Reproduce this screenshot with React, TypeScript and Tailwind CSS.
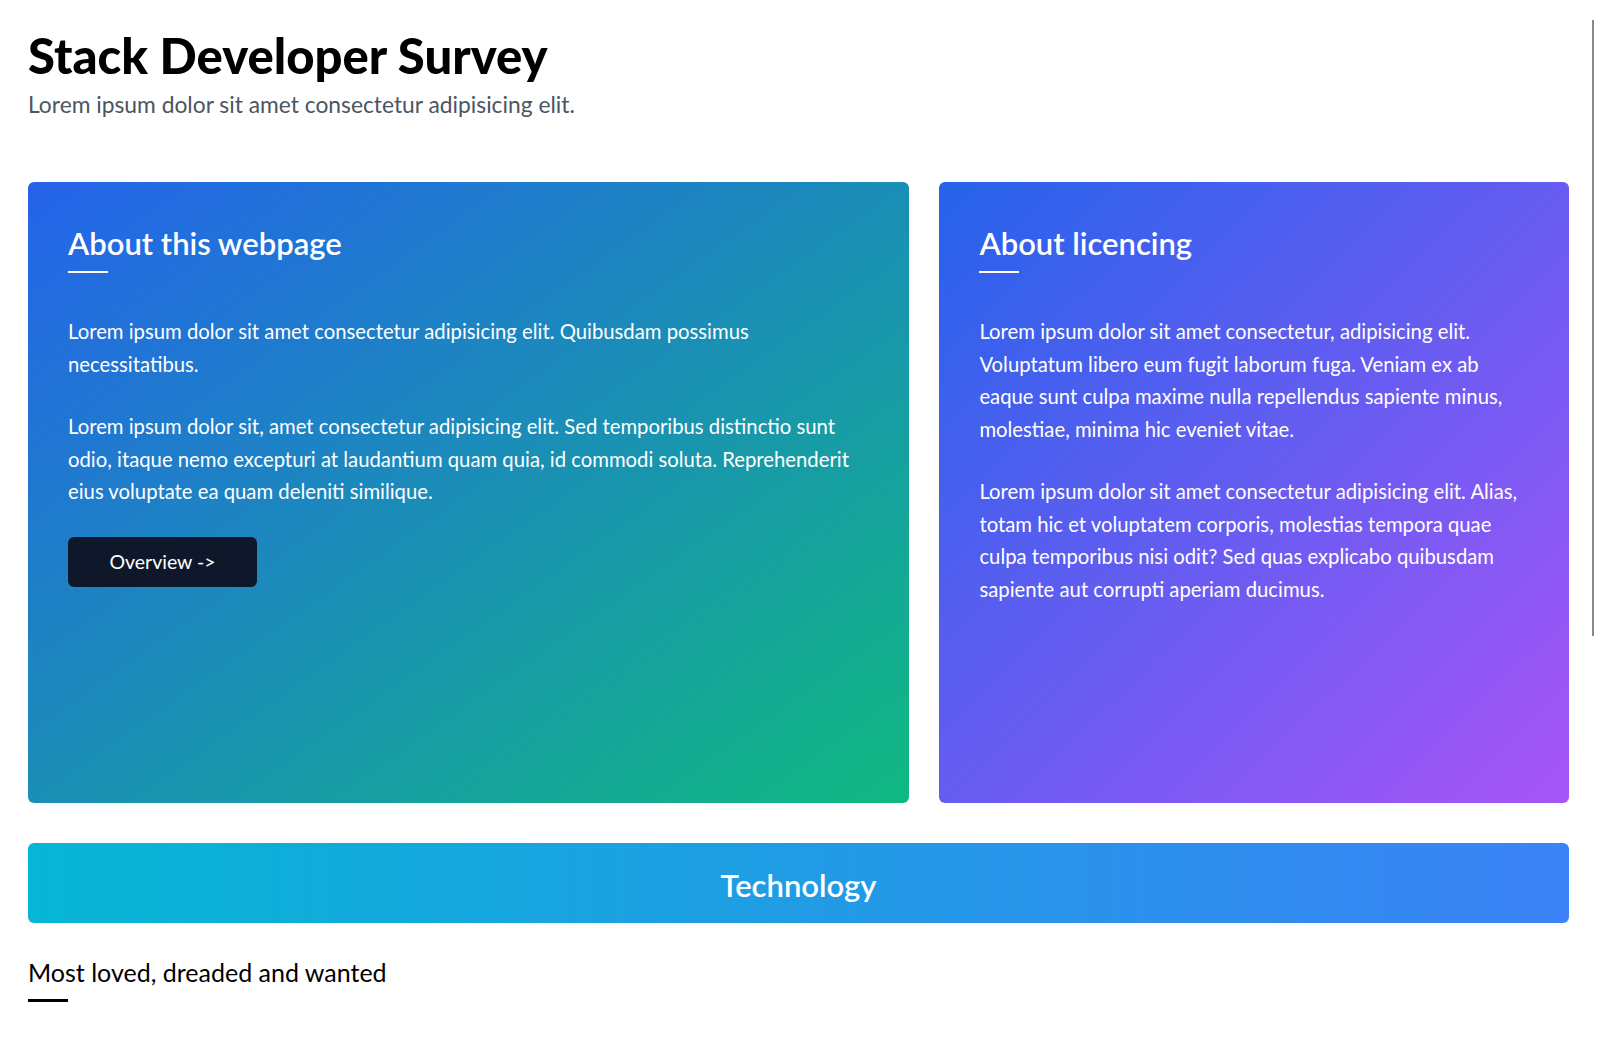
import React from "react";

export default function App() {
  return (
    <div className="min-h-screen bg-white font-['Lato',sans-serif] text-black">
      <div className="px-7 pt-[31px] pb-[700px]">
        <h1 className="text-[49px] leading-none font-black tracking-normal">Stack Developer Survey</h1>
        <p className="mt-[10px] text-[22.8px] leading-[28px] text-[#4b5563]">
          Lorem ipsum dolor sit amet consectetur adipisicing elit.
        </p>

        <div className="mt-[64px] grid grid-cols-[7fr_5fr] gap-[30px]">
          <section className="h-[621px] rounded-md bg-[linear-gradient(to_bottom_right,#2563eb,#10b981)] px-10 pt-[43px] text-white">
            <h2 className="text-[31px] leading-9 font-semibold">About this webpage</h2>
            <div className="mt-[10px] h-[2px] w-10 bg-white" />
            <p className="mt-[42px] text-[20.3px] leading-[32.5px]">
              Lorem ipsum dolor sit amet consectetur adipisicing elit. Quibusdam possimus
              <br />
              necessitatibus.
            </p>
            <p className="mt-[30px] text-[20.3px] leading-[32.5px]">
              Lorem ipsum dolor sit, amet consectetur adipisicing elit. Sed temporibus distinctio sunt
              <br />
              odio, itaque nemo excepturi at laudantium quam quia, id commodi soluta. Reprehenderit
              <br />
              eius voluptate ea quam deleniti similique.
            </p>
            <button className="mt-[29px] flex h-[50px] w-[189px] items-center justify-center rounded-md bg-[#0f172a] text-[19.5px] text-white">
              Overview -&gt;
            </button>
          </section>

          <section className="h-[621px] rounded-md bg-[linear-gradient(to_bottom_right,#2563eb,#a855f7)] px-10 pt-[43px] text-white">
            <h2 className="text-[31px] leading-9 font-semibold">About licencing</h2>
            <div className="mt-[10px] h-[2px] w-10 bg-white" />
            <p className="mt-[42px] text-[20.3px] leading-[32.5px]">
              Lorem ipsum dolor sit amet consectetur, adipisicing elit.
              <br />
              Voluptatum libero eum fugit laborum fuga. Veniam ex ab
              <br />
              eaque sunt culpa maxime nulla repellendus sapiente minus,
              <br />
              molestiae, minima hic eveniet vitae.
            </p>
            <p className="mt-[30px] text-[20.3px] leading-[32.5px]">
              Lorem ipsum dolor sit amet consectetur adipisicing elit. Alias,
              <br />
              totam hic et voluptatem corporis, molestias tempora quae
              <br />
              culpa temporibus nisi odit? Sed quas explicabo quibusdam
              <br />
              sapiente aut corrupti aperiam ducimus.
            </p>
          </section>
        </div>

        <div className="mt-10 flex h-20 items-center justify-center rounded-md bg-[linear-gradient(to_right,#06b6d4,#3b82f6)] pt-1">
          <h2 className="text-[31px] leading-9 font-semibold text-white">Technology</h2>
        </div>

        <h3 className="mt-[33px] text-[25px] leading-8 text-black">Most loved, dreaded and wanted</h3>
        <div className="mt-[11px] h-[3px] w-10 bg-black" />
      </div>

      <div className="fixed top-[20px] left-[1592px] h-[616px] w-[2px] bg-[#8a8a8a]" />
    </div>
  );
}
